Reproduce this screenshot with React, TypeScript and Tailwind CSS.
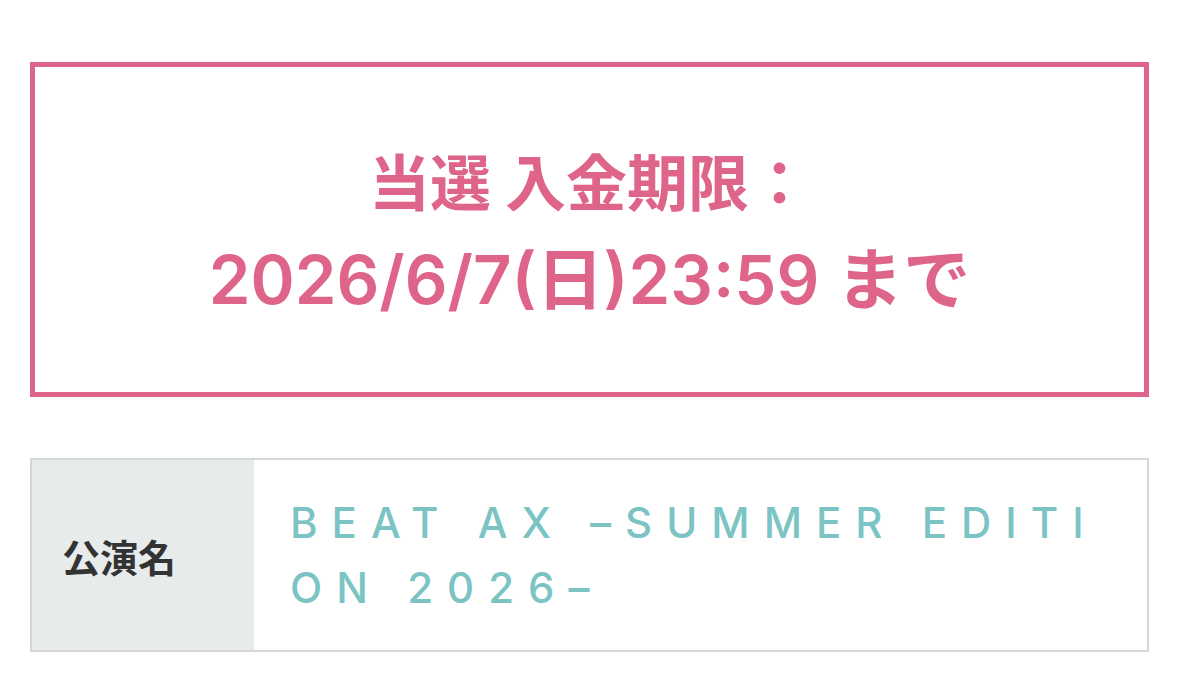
export default function App() {
  return (
    <div className="min-h-screen bg-white px-[30px] pt-[62px] pb-10" style={{ fontFamily: '"Noto Sans CJK JP", sans-serif' }}>
      {/* 入金期限 */}
      <div className="border-[5px] border-[#de6489] h-[335px] flex flex-col items-center justify-center text-[#de6489]">
        <p className="text-[61px] font-bold leading-[100px]" style={{ fontFamily: '"Noto Sans CJK JP", sans-serif' }}>
          当選 入金期限：
        </p>
        <p className="text-[67px] font-semibold leading-[100px]" style={{ fontFamily: 'Inter, "Noto Sans CJK JP", sans-serif' }}>
          2026/6/7(日)23:59 まで
        </p>
      </div>

      {/* 公演情報 */}
      <div className="mt-[61px] border-2 border-[#d4d7d8] flex">
        <div className="w-[222px] shrink-0 bg-[#e8ebec] flex items-center pl-[30px]">
          <span className="text-[38px] font-bold text-[#333]">公演名</span>
        </div>
        <div className="flex-1 bg-white pl-[36px] pr-[30px] py-[30px]">
          <p
            className="text-[42px] font-medium leading-[65px] tracking-[14px] text-[#7cc4c4] break-all"
            style={{ fontFamily: 'Inter, "Noto Sans CJK JP", sans-serif' }}
          >
            BEAT AX –SUMMER EDITION 2026–
          </p>
        </div>
      </div>
    </div>
  );
}
